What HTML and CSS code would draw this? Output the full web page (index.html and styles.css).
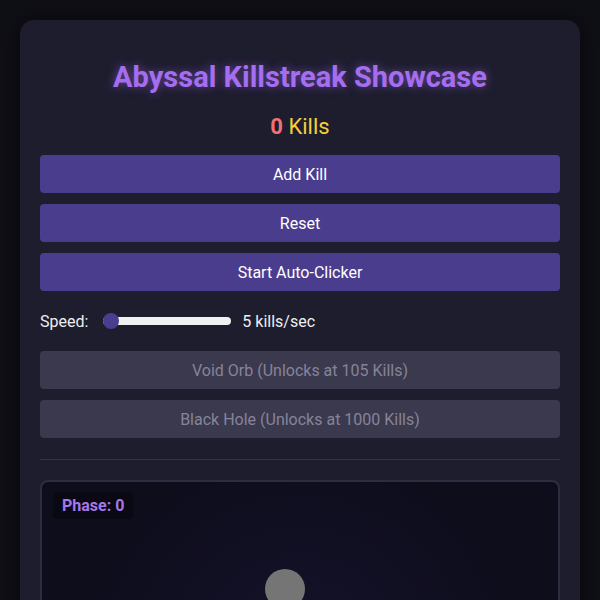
FILE: index.html
```html
<!DOCTYPE html>
<html lang="en">
<head>
    <meta charset="UTF-8" />
    <meta name="viewport" content="width=device-width, initial-scale=1" />
    <title>Abyssal Killstreak Showcase</title>
    <link rel="stylesheet" href="styles.css">
</head>
<body>

<main class="panel">
    <h1 class="title">Abyssal Killstreak Showcase</h1>
    <div class="counter"><span class="count" id="count">0</span> Kills</div>

    <div class="controls">
        <button class="btn" id="addKill">Add Kill</button>
        <button class="btn" id="reset">Reset</button>
        <button class="btn" id="auto">Start Auto-Clicker</button>
    </div>

    <div class="speed">
        <label for="speed">Speed:</label>
        <input type="range" id="speed" min="5" max="100" value="5" />
        <span id="speedValue">5 kills/sec</span>
    </div>

    <div class="controls">
        <button class="btn" disabled>Void Orb (Unlocks at 105 Kills)</button>
        <button class="btn" disabled>Black Hole (Unlocks at 1000 Kills)</button>
    </div>

    <hr class="divider" />

    <section class="arena">
        <div class="phase">Phase: 0</div>
        <div class="orb"></div>
    </section>
</main>

</body>
</html>
```

FILE: styles.css
```css
body {
    font-family: Roboto, 'Liberation Sans', sans-serif;
    background: #0f0f16;
    margin: 0;
    padding: 20px;
    color: #eee;
}

.panel {
    background: #1e1d2e;
    border-radius: 14px;
    padding: 20px 20px 40px;
    box-shadow: 0 0 24px rgba(0,0,0,0.6);
}

.title {
    margin: 20px 0 0;
    text-align: center;
    font-size: 29px;
    font-weight: 700;
    line-height: 34px;
    color: #a56ef0;
    text-shadow: 0 0 10px rgba(165,110,240,0.55);
}

.counter {
    margin: 20px 0 15px;
    text-align: center;
    font-size: 22px;
    line-height: 26px;
    color: #f2cf3c;
}

.count {
    color: #f07272;
    font-weight: 700;
}

.controls {
    display: flex;
    flex-direction: column;
    gap: 11px;
}

.btn {
    height: 38px;
    border: none;
    border-radius: 4px;
    background: #4a3d8e;
    color: #fff;
    font-family: inherit;
    font-size: 16px;
    cursor: pointer;
}

.btn:disabled {
    background: #3b394d;
    color: #86849a;
    cursor: default;
}

.speed {
    display: flex;
    align-items: center;
    height: 60px;
    font-size: 16px;
    color: #eee;
}

.speed input[type="range"] {
    -webkit-appearance: none;
    appearance: none;
    width: 128px;
    height: 8px;
    margin: 0 11px 0 15px;
    border-radius: 4px;
    background: #f0f0f0;
}

.speed input[type="range"]::-webkit-slider-thumb {
    -webkit-appearance: none;
    width: 16px;
    height: 16px;
    border-radius: 50%;
    background: #4a3d8e;
}

.divider {
    border: none;
    border-top: 1px solid #34324a;
    margin: 21px 0 20px;
}

.arena {
    position: relative;
    height: 300px;
    border: 2px solid #2e2c40;
    border-radius: 8px;
    background: radial-gradient(circle at 50% 60%, #14122a, #0e0d1c 70%);
}

.phase {
    position: absolute;
    top: 10px;
    left: 11px;
    padding: 4px 9px;
    border-radius: 4px;
    background: #0a0812;
    color: #a478ea;
    font-size: 16px;
    font-weight: 700;
    line-height: 19px;
}

.orb {
    position: absolute;
    top: 87px;
    left: 223px;
    width: 40px;
    height: 40px;
    border-radius: 50%;
    background: #757575;
}
```
